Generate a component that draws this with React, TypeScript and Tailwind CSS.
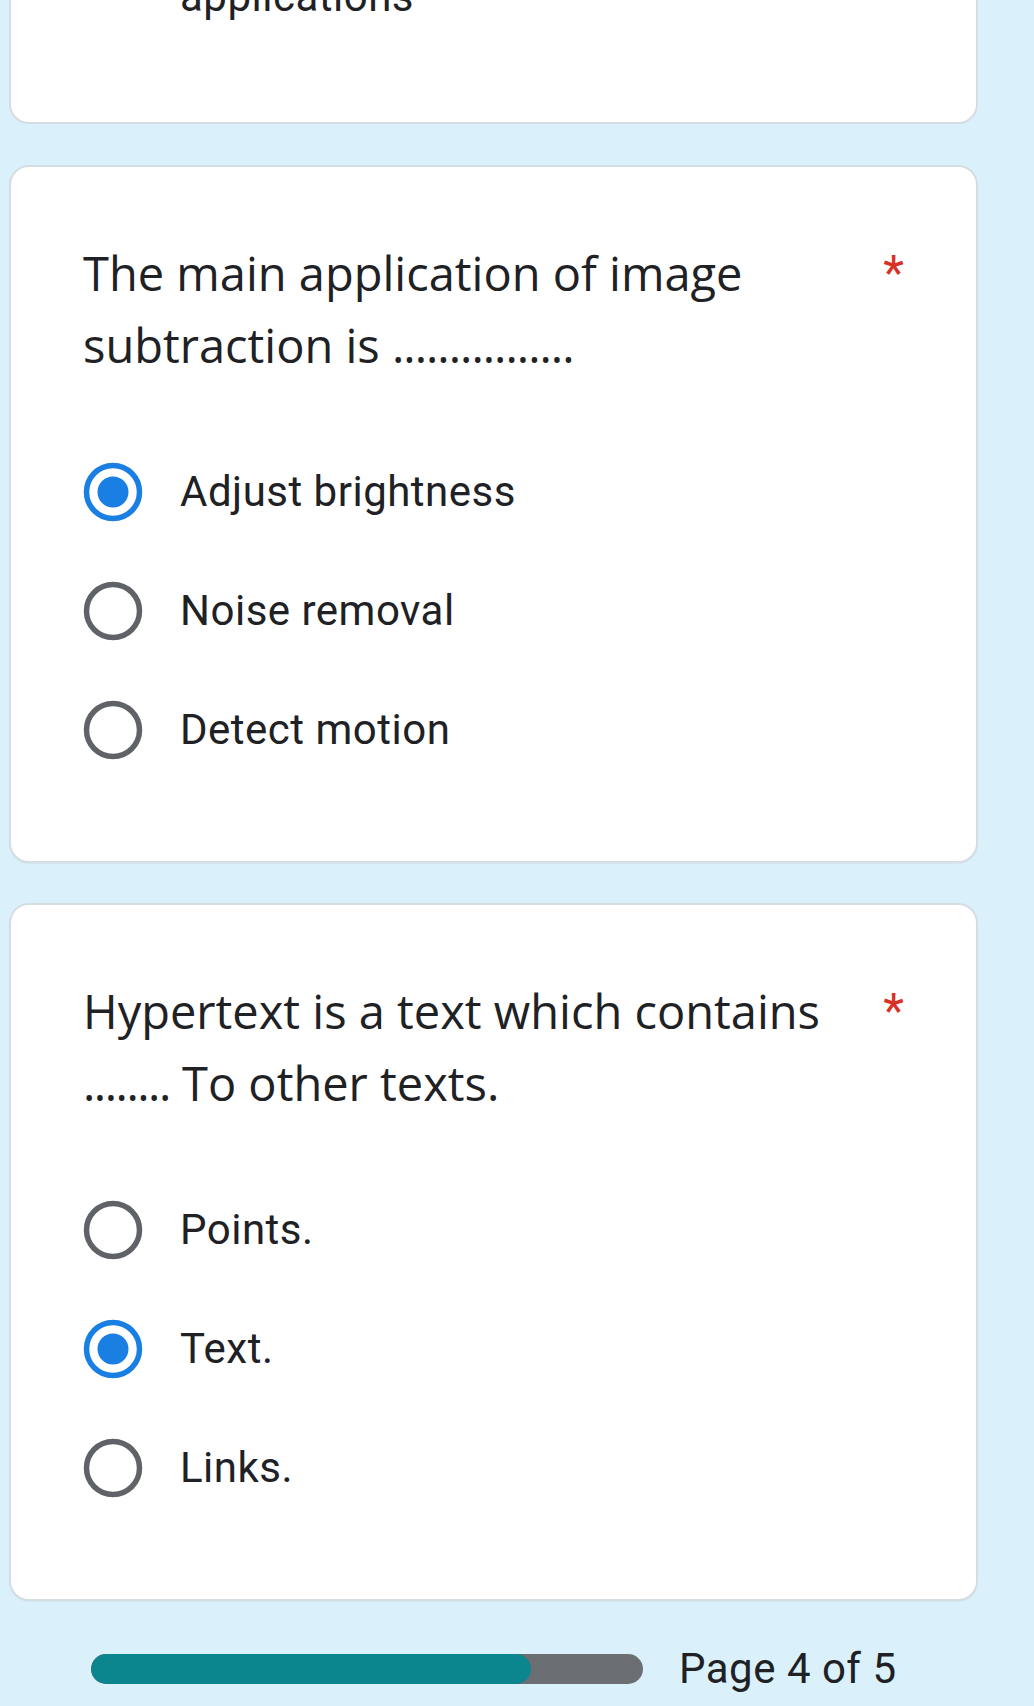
import React from "react";

const sans = { fontFamily: '"Open Sans", "Noto Sans", sans-serif' };
const roboto = { fontFamily: 'Roboto, "Liberation Sans", sans-serif' };

type Q = {
  before: string;
  dots: string;
  after: string;
  dotsClass: string;
  options: string[];
  selected: number;
};

const questions: Q[] = [
  {
    before: "The main application of image subtraction is ",
    dots: "................",
    after: "",
    dotsClass: "tracking-[-1px]",
    options: ["Adjust brightness", "Noise removal", "Detect motion"],
    selected: 0,
  },
  {
    before: "Hypertext is a text which contains ",
    dots: "........",
    after: " To other texts.",
    dotsClass: "tracking-[-1.5px]",
    options: ["Points.", "Text.", "Links."],
    selected: 1,
  },
];

function Radio({ checked }: { checked: boolean }) {
  return (
    <svg width="60" height="60" viewBox="0 0 60 60" className="shrink-0">
      <circle
        cx="30"
        cy="30"
        r="26.5"
        fill="none"
        stroke={checked ? "#1a7fe3" : "#5f6368"}
        strokeWidth="5.5"
      />
      {checked && <circle cx="30" cy="30" r="15.5" fill="#1a7fe3" />}
    </svg>
  );
}

function QuestionCard({ q }: { q: Q }) {
  return (
    <div className="ml-[9px] w-[969px] rounded-[20px] border-2 border-[#d5dde2] bg-white pl-[72px] pr-[72px] pt-[70px] pb-[72px] shadow-[0_1px_1px_rgba(0,0,0,0.04)]">
      <div className="flex items-start justify-between">
        <div
          className="w-[790px] text-[47px] leading-[72px] text-[#202124]"
          style={sans}
        >
          {q.before}
          <span className={q.dotsClass}>{q.dots}</span>
          {q.after}
        </div>
        <span
          className="pt-[12px] text-[48px] leading-[48px] text-[#d93025]"
          style={roboto}
        >
          *
        </span>
      </div>
      <div className="mt-[51px] flex flex-col">
        {q.options.map((opt, i) => (
          <label
            key={opt}
            className="flex h-[119px] items-center gap-[37px] text-[42px] tracking-[0.5px] text-[#202124]"
            style={roboto}
          >
            <Radio checked={i === q.selected} />
            <span>{opt}</span>
          </label>
        ))}
      </div>
    </div>
  );
}

export default function App() {
  return (
    <div className="h-[1706px] w-full overflow-hidden bg-[#daf1fc]">
      {/* tail of the previous question */}
      <div className="-mt-[60px] ml-[9px] h-[184px] w-[969px] rounded-[20px] border-2 border-[#d5dde2] bg-white pl-[169px] pt-[31px]">
        <div
          className="text-[42px] leading-[48px] tracking-[0.5px] text-[#202124]"
          style={roboto}
        >
          applications
        </div>
      </div>

      <div className="mt-[41px] flex flex-col gap-[40px]">
        {questions.map((q) => (
          <QuestionCard key={q.before} q={q} />
        ))}
      </div>

      <div className="mt-[44px] flex items-center pl-[91px]">
        <div className="flex h-[30px] w-[552px] overflow-hidden rounded-full bg-[#6b6f73]">
          <div className="h-full w-[440px] rounded-full bg-[#0b858e]" />
        </div>
        <span
          className="ml-[36px] text-[42px] leading-[48px] tracking-[0.5px] text-[#202124]"
          style={roboto}
        >
          Page 4 of 5
        </span>
      </div>
    </div>
  );
}
